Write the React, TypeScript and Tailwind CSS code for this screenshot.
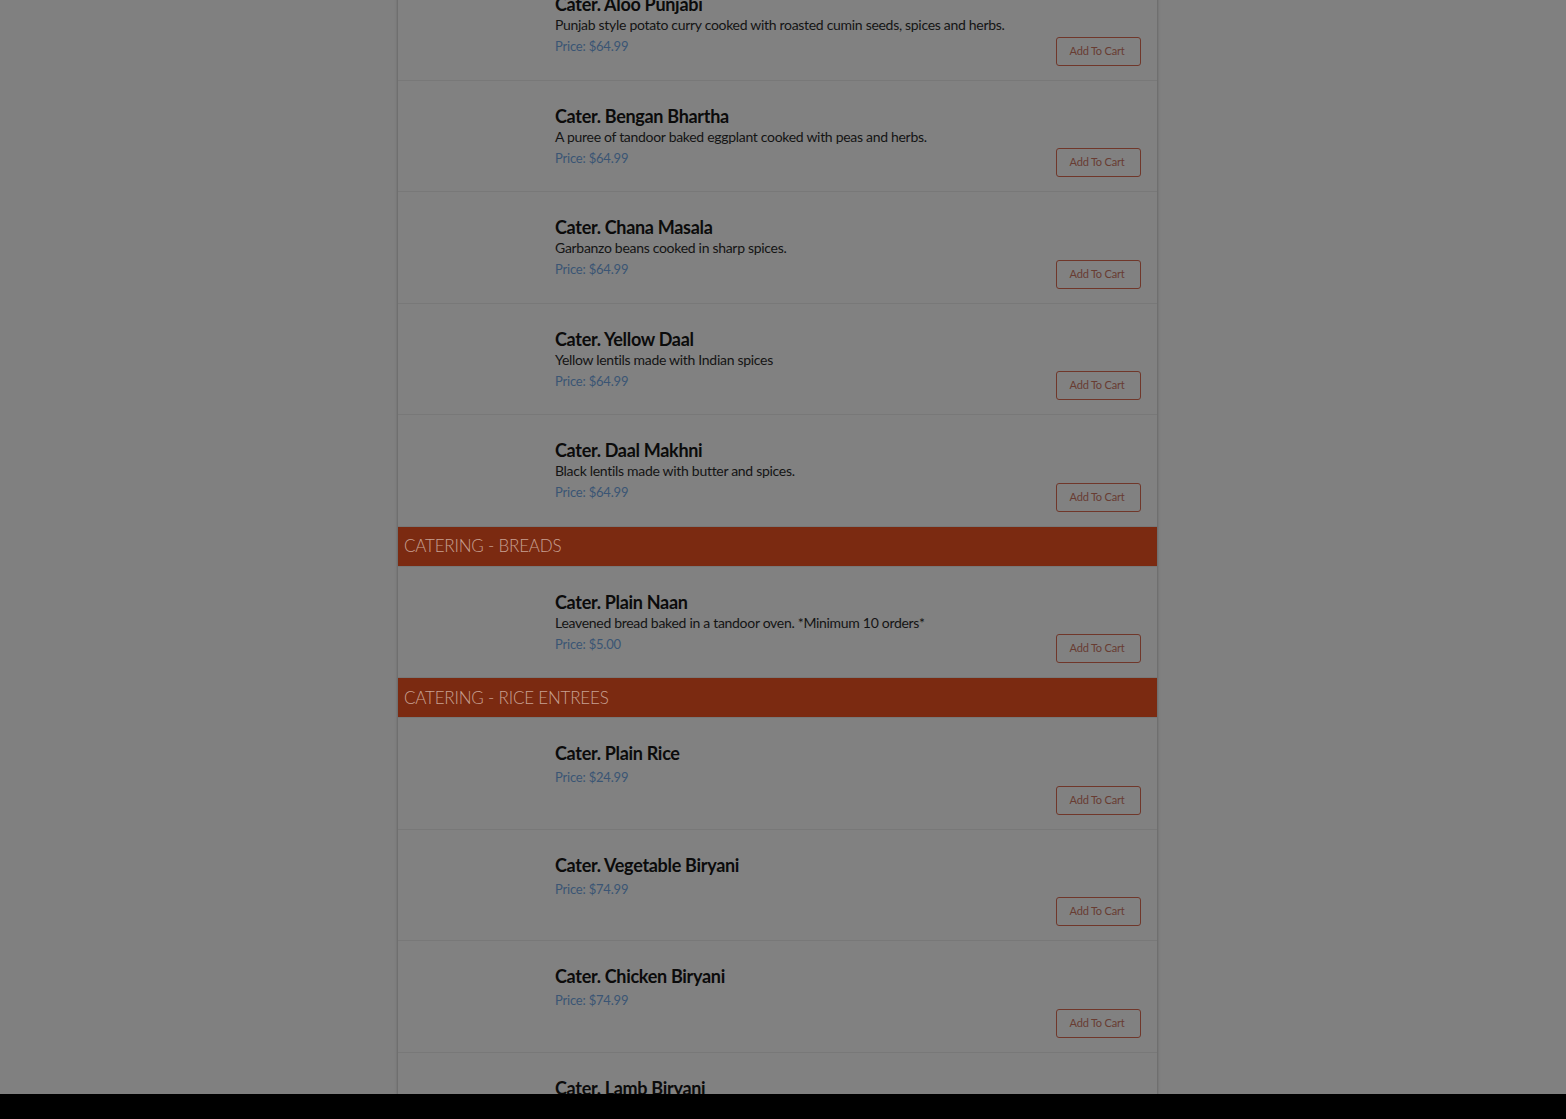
import React from 'react';

type Item = { name: string; desc?: string; price: string };

const curries: Item[] = [
  { name: 'Cater. Aloo Punjabi', desc: 'Punjab style potato curry cooked with roasted cumin seeds, spices and herbs.', price: '$64.99' },
  { name: 'Cater. Bengan Bhartha', desc: 'A puree of tandoor baked eggplant cooked with peas and herbs.', price: '$64.99' },
  { name: 'Cater. Chana Masala', desc: 'Garbanzo beans cooked in sharp spices.', price: '$64.99' },
  { name: 'Cater. Yellow Daal', desc: 'Yellow lentils made with Indian spices', price: '$64.99' },
  { name: 'Cater. Daal Makhni', desc: 'Black lentils made with butter and spices.', price: '$64.99' },
];

const breads: Item[] = [
  { name: 'Cater. Plain Naan', desc: 'Leavened bread baked in a tandoor oven. *Minimum 10 orders*', price: '$5.00' },
];

const rice: Item[] = [
  { name: 'Cater. Plain Rice', price: '$24.99' },
  { name: 'Cater. Vegetable Biryani', price: '$74.99' },
  { name: 'Cater. Chicken Biryani', price: '$74.99' },
  { name: 'Cater. Lamb Biryani', price: '$74.99' },
];

const Row = ({ item }: { item: Item }) => (
  <div className='flex h-[111.5px] border-b border-[#787878]'>
    {/* image slot (empty) */}
    <div className='w-[157px] shrink-0'></div>
    <div className='flex-1 pt-[24px]'>
      <p className='text-[18px] font-bold leading-[22px] tracking-[-0.3px] text-[#0b0b0b]'>{item.name}</p>
      {item.desc && <p className='text-[14px] leading-[20px] tracking-[-0.3px] text-[#141414]'>{item.desc}</p>}
      <p className={`text-[13px] leading-[20px] tracking-[-0.2px] text-[#3a5574] ${item.desc ? 'mt-[1px]' : 'mt-[3px]'}`}>Price: {item.price}</p>
    </div>
    <div className='flex items-end pb-[14px] pr-[16px]'>
      <button className='h-[29px] w-[85px] border border-[#70372a] rounded-[3px] text-[11px] tracking-[-0.2px] text-[#683c32] pr-[3px]'>
        Add To Cart
      </button>
    </div>
  </div>
);

const Header = ({ title }: { title: string }) => (
  <div className='h-[40px] bg-[#7b2a11] flex items-center px-[6px] border-b border-[#787878]'>
    <p className='text-[17px] font-light tracking-[-0.2px] text-[#c8a092] uppercase'>{title}</p>
  </div>
);

export default function App() {
  return (
    <div className='h-[1119px] overflow-hidden bg-[#808080] relative' style={{ fontFamily: '"Lato", "Noto Sans", sans-serif' }}>
      <div className='ml-[398px] w-[759px] -mt-[31px] bg-[#818181] shadow-[0_0_3px_rgba(0,0,0,0.35)]'>
        {curries.map((it, idx) => (
          <Row key={idx} item={it} />
        ))}
        <Header title='Catering - Breads' />
        {breads.map((it, idx) => (
          <Row key={idx} item={it} />
        ))}
        <Header title='Catering - Rice Entrees' />
        {rice.map((it, idx) => (
          <Row key={idx} item={it} />
        ))}
      </div>
      <div className='absolute left-0 right-0 bottom-0 h-[25px] bg-black'></div>
    </div>
  );
}
